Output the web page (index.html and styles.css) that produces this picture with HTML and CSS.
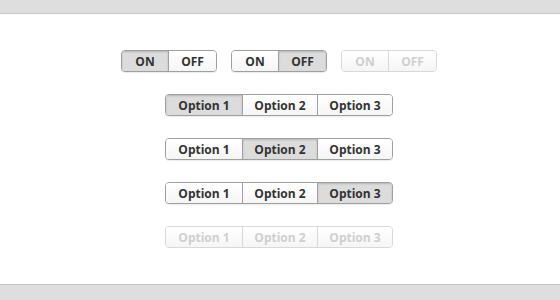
FILE: index.html
```html
<!DOCTYPE html>
<html>
<head>
<meta charset="UTF-8">
<link rel="stylesheet" href="styles.css">
</head>
<body>
<div class="bar top"></div>
<div class="stage">
  <div class="row">
    <div class="seg switch">
      <span class="item active">ON</span><span class="item">OFF</span>
    </div>
    <div class="seg switch">
      <span class="item">ON</span><span class="item active">OFF</span>
    </div>
    <div class="seg switch disabled">
      <span class="item">ON</span><span class="item">OFF</span>
    </div>
  </div>
  <div class="row">
    <div class="seg options">
      <span class="item active">Option 1</span><span class="item">Option 2</span><span class="item">Option 3</span>
    </div>
  </div>
  <div class="row">
    <div class="seg options">
      <span class="item">Option 1</span><span class="item active">Option 2</span><span class="item">Option 3</span>
    </div>
  </div>
  <div class="row">
    <div class="seg options">
      <span class="item">Option 1</span><span class="item">Option 2</span><span class="item active">Option 3</span>
    </div>
  </div>
  <div class="row">
    <div class="seg options disabled">
      <span class="item">Option 1</span><span class="item">Option 2</span><span class="item">Option 3</span>
    </div>
  </div>
</div>
<div class="bar bottom"></div>
</body>
</html>
```

FILE: styles.css
```css
* {
  box-sizing: border-box;
}
body {
  margin: 0;
  background: #fff;
  font-family: "Open Sans", "DejaVu Sans", sans-serif;
}
.bar {
  background-color: #dedede;
}
.bar.top {
  height: 14px;
  border-bottom: 1px solid #c6c6c6;
}
.bar.bottom {
  height: 16px;
  border-top: 1px solid #c6c6c6;
}
.stage {
  height: 270px;
  padding-top: 36px;
  display: flex;
  flex-direction: column;
  align-items: center;
  gap: 22px;
}
.row {
  display: flex;
  gap: 14px;
  padding-right: 2px;
}

.seg {
  display: flex;
  height: 22px;
  border: 1px solid #a0a0a0;
  border-radius: 4px;
  overflow: hidden;
  background: #fff;
  box-shadow: 0 1px 1px rgba(0, 0, 0, 0.08);
}
.item {
  display: flex;
  align-items: center;
  justify-content: center;
  font-size: 12px;
  font-weight: 700;
  color: #333;
  background: linear-gradient(#fff, #f5f5f5);
  border-left: 1px solid #a0a0a0;
}
.item:first-child {
  border-left: none;
}
.item.active {
  background: #dcdcdc;
  box-shadow: inset 0 1px 2px rgba(0, 0, 0, 0.18);
}
.switch .item {
  width: 48px;
}
.switch .item:first-child {
  width: 46px;
}
.options .item {
  width: 75px;
}
.options .item:first-child {
  width: 76px;
}

.disabled {
  border-color: #d8d8d8;
  box-shadow: none;
}
.disabled .item {
  color: #cfcfcf;
  border-color: #d8d8d8;
}
```
